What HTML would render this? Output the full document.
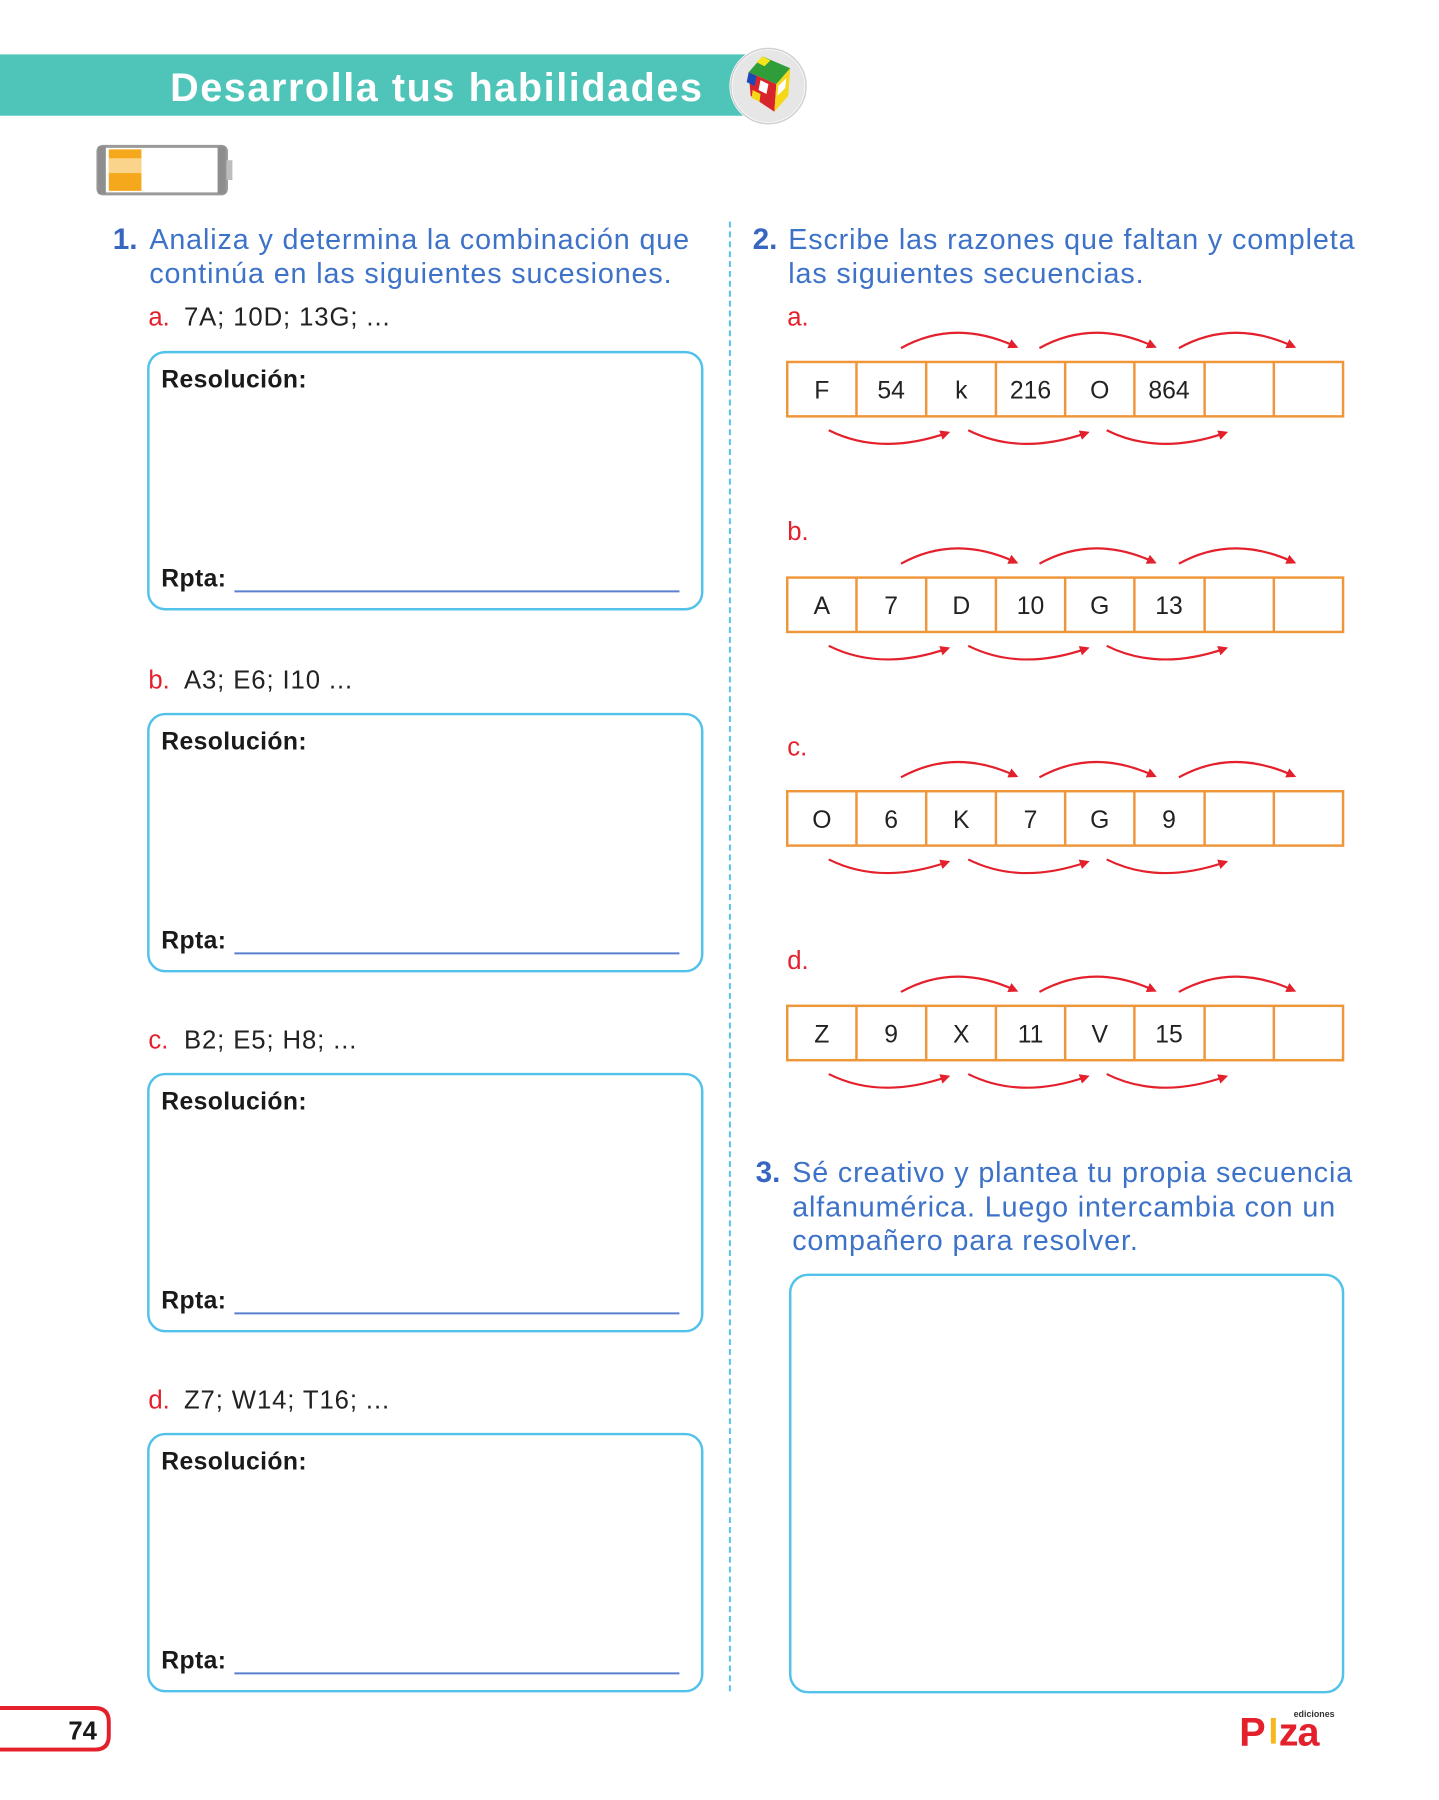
<!DOCTYPE html>
<html><head><meta charset="utf-8"><style>
html,body{margin:0;padding:0;background:#fff;}
svg{display:block}
text{font-family:"Liberation Sans","DejaVu Sans",sans-serif}
.q{fill:#3d72c9;font-size:29px;letter-spacing:0.9px}
.n{fill:#3766c2;font-size:30px;font-weight:bold}
.l{fill:#e4202c;font-size:26px}
.s{fill:#222;font-size:26px;letter-spacing:0.9px}
.b{fill:#1a1a1a;font-size:25px;font-weight:bold;letter-spacing:0.4px}
.c{fill:#222;font-size:25px;text-anchor:middle}
.box{fill:none;stroke:#52c2ea;stroke-width:2.5}
.ln{stroke:#5b7fd0;stroke-width:2}
.cell{fill:none;stroke:#f0963a;stroke-width:2.5}
.ar{fill:none;stroke:#e4202c;stroke-width:2.2}
</style></head><body>
<svg width="1439" height="1800" viewBox="0 0 1439 1800" xmlns="http://www.w3.org/2000/svg">
<defs>
<marker id="m" markerWidth="10" markerHeight="10" refX="6" refY="5" orient="auto" markerUnits="userSpaceOnUse" viewBox="0 0 10 10"><path d="M0,0 L10,5 L0,10 z" fill="#e4202c"/></marker>
<g id="arrows">
<path class="ar" marker-end="url(#m)" d="M911,-14 Q965,-44 1026,-16"/>
<path class="ar" marker-end="url(#m)" d="M1051,-14 Q1105,-44 1166,-16"/>
<path class="ar" marker-end="url(#m)" d="M1192,-14 Q1246,-44 1307,-16"/>
<path class="ar" marker-end="url(#m)" d="M838,69 Q890,95 957,72"/>
<path class="ar" marker-end="url(#m)" d="M979,69 Q1031,95 1098,72"/>
<path class="ar" marker-end="url(#m)" d="M1119,69 Q1171,95 1238,72"/>
</g>
<g id="grid">
<rect class="cell" x="796" y="0" width="562" height="55"/>
<path class="cell" d="M866,0v55M936.5,0v55M1007,0v55M1077,0v55M1147,0v55M1218,0v55M1288,0v55"/>
</g>
</defs>
<g transform="scale(0.989)">
<!-- header -->
<rect x="0" y="55" width="760" height="62" fill="#4fc4b9"/>
<text x="172" y="102" fill="#fff" style="font-size:40px;font-weight:bold;letter-spacing:1.6px">Desarrolla tus habilidades</text>
<circle cx="777" cy="87" r="38" fill="#e6e6e6" stroke="#fff" stroke-width="3"/>
<circle cx="777" cy="87" r="38" fill="none" stroke="#cfcfcf" stroke-width="1.5"/>
<g transform="translate(777,87)">
<polygon points="-6,-30 22,-18 8,-2 -20,-14" fill="#2f9e3a"/>
<polygon points="-20,-14 8,-2 6,26 -18,10" fill="#d8252b"/>
<polygon points="8,-2 22,-18 20,10 6,26" fill="#f5d81a"/>
<polygon points="-6,-30 2,-26 -4,-20 -12,-24" fill="#f5e51a"/>
<polygon points="-20,-14 -12,-10 -14,0 -22,-4" fill="#1c49b8"/>
<polygon points="-8,-6 0,-2 -2,8 -10,4" fill="#fff"/>
<polygon points="10,0 18,-8 17,2 9,10" fill="#fff"/>
<polygon points="-16,4 -8,8 -9,16 -17,12" fill="#f5d81a"/>
</g>
<!-- battery -->
<rect x="99" y="148" width="130" height="48" rx="5" fill="#fff" stroke="#9a9a9a" stroke-width="3"/>
<rect x="99" y="148" width="8" height="48" fill="#8e8e8e"/>
<rect x="220" y="148" width="8" height="48" fill="#8e8e8e"/>
<rect x="229" y="162" width="6" height="20" fill="#bdbdbd"/>
<rect x="110" y="151" width="33" height="42" fill="#f6a81c"/>
<rect x="110" y="160" width="33" height="15" fill="#f9d48a"/>
<!-- divider -->
<line x1="738" y1="224" x2="738" y2="1712" stroke="#52c2ea" stroke-width="2" stroke-dasharray="6,4"/>
<!-- left col -->
<text x="114" y="252" class="n">1.</text>
<text x="151" y="252" class="q">Analiza y determina la combinación que</text>
<text x="151" y="286" class="q">continúa en las siguientes sucesiones.</text>

<text x="150" y="329" class="l">a.</text><text x="186" y="329" class="s">7A; 10D; 13G; ...</text>
<rect class="box" x="150" y="356" width="560" height="260" rx="17"/>
<text x="163" y="392" class="b">Resolución:</text>
<text x="163" y="593" class="b">Rpta:</text><line class="ln" x1="237" y1="598" x2="687" y2="598"/>

<text x="150" y="696" class="l">b.</text><text x="186" y="696" class="s">A3; E6; I10 ...</text>
<rect class="box" x="150" y="722" width="560" height="260" rx="17"/>
<text x="163" y="758" class="b">Resolución:</text>
<text x="163" y="959" class="b">Rpta:</text><line class="ln" x1="237" y1="964" x2="687" y2="964"/>

<text x="150" y="1060" class="l">c.</text><text x="186" y="1060" class="s">B2; E5; H8; ...</text>
<rect class="box" x="150" y="1086" width="560" height="260" rx="17"/>
<text x="163" y="1122" class="b">Resolución:</text>
<text x="163" y="1323" class="b">Rpta:</text><line class="ln" x1="237" y1="1328" x2="687" y2="1328"/>

<text x="150" y="1424" class="l">d.</text><text x="186" y="1424" class="s">Z7; W14; T16; ...</text>
<rect class="box" x="150" y="1450" width="560" height="260" rx="17"/>
<text x="163" y="1486" class="b">Resolución:</text>
<text x="163" y="1687" class="b">Rpta:</text><line class="ln" x1="237" y1="1692" x2="687" y2="1692"/>

<!-- right col -->
<text x="761" y="252" class="n">2.</text>
<text x="797" y="252" class="q">Escribe las razones que faltan y completa</text>
<text x="797" y="286" class="q">las siguientes secuencias.</text>

<text x="796" y="329" class="l">a.</text>
<g transform="translate(0,366)"><use href="#grid"/><use href="#arrows"/>
<text y="37"><tspan class="c" x="831">F</tspan><tspan class="c" x="901">54</tspan><tspan class="c" x="972">k</tspan><tspan class="c" x="1042">216</tspan><tspan class="c" x="1112">O</tspan><tspan class="c" x="1182">864</tspan></text></g>

<text x="796" y="546" class="l">b.</text>
<g transform="translate(0,584)"><use href="#grid"/><use href="#arrows"/>
<text y="37"><tspan class="c" x="831">A</tspan><tspan class="c" x="901">7</tspan><tspan class="c" x="972">D</tspan><tspan class="c" x="1042">10</tspan><tspan class="c" x="1112">G</tspan><tspan class="c" x="1182">13</tspan></text></g>

<text x="796" y="764" class="l">c.</text>
<g transform="translate(0,800)"><use href="#grid"/><use href="#arrows"/>
<text y="37"><tspan class="c" x="831">O</tspan><tspan class="c" x="901">6</tspan><tspan class="c" x="972">K</tspan><tspan class="c" x="1042">7</tspan><tspan class="c" x="1112">G</tspan><tspan class="c" x="1182">9</tspan></text></g>

<text x="796" y="980" class="l">d.</text>
<g transform="translate(0,1017)"><use href="#grid"/><use href="#arrows"/>
<text y="37"><tspan class="c" x="831">Z</tspan><tspan class="c" x="901">9</tspan><tspan class="c" x="972">X</tspan><tspan class="c" x="1042">11</tspan><tspan class="c" x="1112">V</tspan><tspan class="c" x="1182">15</tspan></text></g>

<text x="764" y="1195" class="n">3.</text>
<text x="801" y="1195" class="q">Sé creativo y plantea tu propia secuencia</text>
<text x="801" y="1230" class="q">alfanumérica. Luego intercambia con un</text>
<text x="801" y="1264" class="q">compañero para resolver.</text>
<rect class="box" x="799" y="1289" width="559" height="422" rx="18"/>

<!-- footer -->
<path d="M0,1727 H96 Q110,1727 110,1741 V1755 Q110,1769 96,1769 H0" fill="#fff" stroke="#e4202c" stroke-width="4"/>
<text x="98" y="1759" text-anchor="end" style="font-size:26px;font-weight:bold;fill:#1a1a1a">74</text>
<text x="1308" y="1736" style="font-size:9px;font-weight:bold;fill:#333">ediciones</text>
<text x="1253" y="1765" style="font-size:40px;font-weight:bold;fill:#e4202c;letter-spacing:-1px">P</text>
<rect x="1285" y="1737" width="5" height="26" fill="#f6b81c"/>
<text x="1293" y="1765" style="font-size:40px;font-weight:bold;fill:#e4202c;letter-spacing:-1px">za</text>
</g>
</svg>
</body></html>
